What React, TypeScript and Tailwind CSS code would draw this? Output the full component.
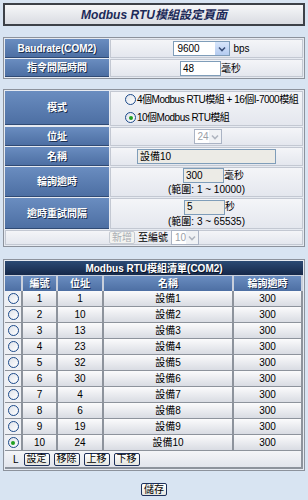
import React from 'react';

const FONT = "font-['Liberation_Sans','Noto_Sans_CJK_TC',sans-serif]";

const Label: React.FC<{ children: React.ReactNode; h: string }> = ({ children, h }) => (
  <div
    className={`${h} w-[104px] shrink-0 flex items-center justify-center bg-gradient-to-b from-[#6a8dc0] to-[#4d6fa3] border-b border-[#2f4a74] text-white text-[10px] font-bold [text-shadow:1px_1px_0_#1d2f4d]`}
  >
    {children}
  </div>
);

const Value: React.FC<{ children: React.ReactNode; className?: string }> = ({ children, className = '' }) => (
  <div className={`flex-1 min-w-0 bg-gradient-to-b from-[#f4f5f8] to-[#e4e7ee] border border-[#c3c8d2] text-[10px] text-black ${className}`}>
    {children}
  </div>
);

const Select: React.FC<{ value: string; w: string; disabled?: boolean }> = ({ value, w, disabled }) => (
  <div
    className={`${w} h-[15px] flex items-center justify-between bg-white border ${
      disabled ? 'border-[#aab3c4] text-[#9aa0a8]' : 'border-[#7f9db9] text-black'
    } pl-[3px] text-[10px]`}
  >
    <span>{value}</span>
    <span
      className={`w-[14px] h-[13px] flex items-center justify-center ${
        disabled ? 'bg-[#f0f2f5] text-[#b0b6c0]' : 'bg-gradient-to-b from-[#d8e6fb] to-[#b4cbf0] text-[#3a4f7a]'
      }`}
    >
      <svg width="8" height="6" viewBox="0 0 8 6">
        <path d="M1 1.5 L4 4.5 L7 1.5" fill="none" stroke="currentColor" strokeWidth="1.6" />
      </svg>
    </span>
  </div>
);

const Input: React.FC<{ value: string; w: string; gray?: boolean }> = ({ value, w, gray }) => (
  <div
    className={`${w} h-[15px] flex items-center border border-[#7f9db9] ${gray ? 'bg-[#ecebe6]' : 'bg-white'} pl-[2px] text-[10px]`}
  >
    {value}
  </div>
);

const Radio: React.FC<{ checked?: boolean }> = ({ checked }) => (
  <span className="w-[11px] h-[11px] rounded-full border border-[#1c4a8a] bg-gradient-to-br from-[#dfe3ea] to-white flex items-center justify-center shrink-0">
    {checked && <span className="w-[4px] h-[4px] rounded-full bg-[#21a121]" />}
  </span>
);

const Btn: React.FC<{ children: React.ReactNode; disabled?: boolean }> = ({ children, disabled }) => (
  <span
    className={`h-[13px] px-[2px] flex items-center rounded-[2px] border text-[10px] leading-none ${
      disabled
        ? 'border-[#c6cbd3] text-[#a8acb3] bg-[#f3f3f0]'
        : 'border-[#1c2f5a] text-black bg-gradient-to-b from-white to-[#e6e6e0]'
    }`}
  >
    {children}
  </span>
);

const modules = [
  { no: 1, addr: 1, name: '設備1' },
  { no: 2, addr: 10, name: '設備2' },
  { no: 3, addr: 13, name: '設備3' },
  { no: 4, addr: 23, name: '設備4' },
  { no: 5, addr: 32, name: '設備5' },
  { no: 6, addr: 30, name: '設備6' },
  { no: 7, addr: 4, name: '設備7' },
  { no: 8, addr: 6, name: '設備8' },
  { no: 9, addr: 19, name: '設備9' },
  { no: 10, addr: 24, name: '設備10' },
];

const Cell: React.FC<{ children?: React.ReactNode; w: string }> = ({ children, w }) => (
  <div
    className={`${w} h-[16px] flex items-center justify-center bg-gradient-to-b from-[#fbfbfc] to-[#d9dce3] border-r-2 border-b border-[#8d939c] text-[10px] text-black`}
  >
    {children}
  </div>
);

const HeadCell: React.FC<{ children?: React.ReactNode; w: string }> = ({ children, w }) => (
  <div
    className={`${w} h-[15px] flex items-center justify-center bg-gradient-to-b from-[#6a8dc0] to-[#4d6fa3] border-r-2 border-[#c9d0dc] text-white text-[10px] font-bold [text-shadow:1px_1px_0_#1d2f4d]`}
  >
    {children}
  </div>
);

const cols = ['w-[18px]', 'w-[35px]', 'w-[46px]', 'w-[130px]', 'flex-1'];

const App: React.FC = () => {
  return (
    <div className={`w-[308px] h-[500px] bg-[#d8e4f2] px-[3px] pt-[3px] ${FONT}`}>
      {/* title */}
      <div className="h-[23px] border-2 border-[#3d4148] bg-gradient-to-b from-[#f6f7f9] to-[#d9dce2] flex items-center justify-center text-[12px] italic font-bold text-[#1c2a58]">
        Modbus RTU模組設定頁面
      </div>

      {/* COM settings */}
      <div className="mt-[11px] border border-[#8c929c] bg-[#e6eaf1] p-[1px] flex flex-col gap-[1px]">
        <div className="flex gap-[1px]">
          <Label h="h-[19px]">Baudrate(COM2)</Label>
          <Value className="flex items-center justify-center gap-[3px] pl-[10px]">
            <Select value="9600" w="w-[57px]" />
            <span>bps</span>
          </Value>
        </div>
        <div className="flex gap-[1px]">
          <Label h="h-[18px]">指令間隔時間</Label>
          <Value className="flex items-center justify-center pl-[8px]">
            <Input value="48" w="w-[41px]" />
            <span>毫秒</span>
          </Value>
        </div>
      </div>

      {/* module edit */}
      <div className="mt-[10px] border border-[#8c929c] bg-[#e6eaf1] p-[1px] flex flex-col gap-[1px]">
        <div className="flex gap-[1px]">
          <Label h="h-[34px]">模式</Label>
          <Value className="flex flex-col justify-center pl-[14px] gap-[3px] text-[9px] tracking-[-0.5px]">
            <div className="flex items-center gap-[1px] whitespace-nowrap">
              <Radio />
              <span>4個Modbus RTU模組 + 16個I-7000模組</span>
            </div>
            <div className="flex items-center gap-[1px] whitespace-nowrap">
              <Radio checked />
              <span>10個Modbus RTU模組</span>
            </div>
          </Value>
        </div>
        <div className="flex gap-[1px]">
          <Label h="h-[19px]">位址</Label>
          <Value className="flex items-center justify-center pl-[2px]">
            <Select value="24" w="w-[28px]" disabled />
          </Value>
        </div>
        <div className="flex gap-[1px]">
          <Label h="h-[19px]">名稱</Label>
          <Value className="flex items-center pl-[26px]">
            <Input value="設備10" w="w-[139px]" gray />
          </Value>
        </div>
        <div className="flex gap-[1px]">
          <Label h="h-[30px]">輪詢逾時</Label>
          <Value className="flex flex-col items-center justify-center leading-[12px]">
            <div className="flex items-center pl-[14px]">
              <Input value="300" w="w-[41px]" gray />
              <span>毫秒</span>
            </div>
            <span className="mt-[1px]">(範圍: 1 ~ 10000)</span>
          </Value>
        </div>
        <div className="flex gap-[1px]">
          <Label h="h-[31px]">逾時重試間隔</Label>
          <Value className="flex flex-col items-center justify-center leading-[12px]">
            <div className="flex items-center pl-[6px]">
              <Input value="5" w="w-[41px]" gray />
              <span>秒</span>
            </div>
            <span className="mt-[1px]">(範圍: 3 ~ 65535)</span>
          </Value>
        </div>
        <Value className="h-[15px] flex-none flex items-center justify-center gap-[3px]">
          <Btn disabled>新增</Btn>
          <span>至編號</span>
          <Select value="10" w="w-[28px]" disabled />
        </Value>
      </div>

      {/* module list */}
      <div className="mt-[12px] border border-[#8c929c] bg-[#e6eaf1] p-[1px]">
        <div className="h-[14px] flex items-center justify-center bg-gradient-to-b from-[#2b4a74] to-[#16294a] text-white text-[10px] font-bold [text-shadow:1px_1px_0_#0c1528]">
          Modbus RTU模組清單(COM2)
        </div>
        <div className="flex border-t border-[#c9d0dc]">
          <HeadCell w={cols[0]} />
          <HeadCell w={cols[1]}>編號</HeadCell>
          <HeadCell w={cols[2]}>位址</HeadCell>
          <HeadCell w={cols[3]}>名稱</HeadCell>
          <HeadCell w={cols[4]}>輪詢逾時</HeadCell>
        </div>
        {modules.map((m) => (
          <div key={m.no} className="flex">
            <div className="w-[18px] h-[16px] flex items-center justify-center bg-[#eef0f4] border-r-2 border-b border-[#8d939c]">
              <Radio checked={m.no === 10} />
            </div>
            <Cell w={cols[1]}>{m.no}</Cell>
            <Cell w={cols[2]}>{m.addr}</Cell>
            <Cell w={cols[3]}>{m.name}</Cell>
            <Cell w={cols[4]}>300</Cell>
          </div>
        ))}
        <div className="h-[18px] flex items-center gap-[4px] pl-[8px] bg-gradient-to-b from-[#f4f5f8] to-[#e2e5ec] border-r-2 border-b-2 border-[#8d939c] text-[10px]">
          <span className="mr-[1px]">L</span>
          <Btn>設定</Btn>
          <Btn>移除</Btn>
          <Btn>上移</Btn>
          <Btn>下移</Btn>
        </div>
      </div>

      <div className="mt-[12px] flex justify-center">
        <Btn>儲存</Btn>
      </div>
    </div>
  );
};

export default App;
